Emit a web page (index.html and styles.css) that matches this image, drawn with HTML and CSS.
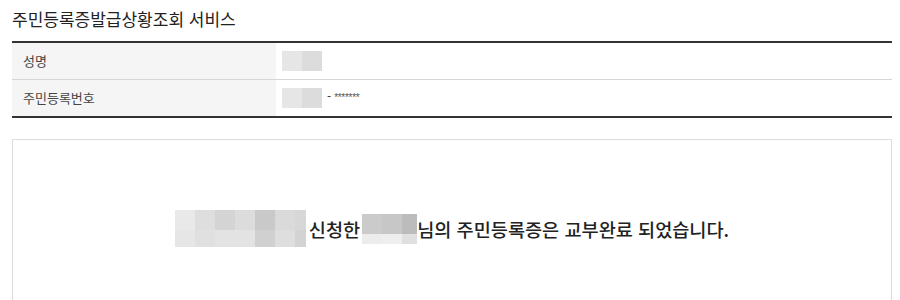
FILE: index.html
```html
<!DOCTYPE html>
<html lang="ko">
<head>
<meta charset="utf-8">
<link rel="stylesheet" href="styles.css">
</head>
<body>
<div class="page">
  <h1 class="title">주민등록증발급상황조회 서비스</h1>
  <table class="info">
    <tr>
      <th>성명</th>
      <td><span class="blur small"><i class="c1"></i><i class="c2"></i></span></td>
    </tr>
    <tr>
      <th>주민등록번호</th>
      <td><span class="blur small"><i class="c1"></i><i class="c2"></i></span><span class="dash">-</span><span class="stars">*******</span></td>
    </tr>
  </table>
  <div class="result">
    <p class="msg"><span class="blur big"><i class="b1"></i><i class="b2"></i><i class="b3"></i><i class="b4"></i><i class="b5"></i><i class="b6"></i><i class="b7"></i><i class="b8"></i><i class="b9"></i><i class="b10"></i><i class="b10"></i><i class="b11"></i><i class="b12"></i><i class="b13"></i></span><span class="t">신청한</span><span class="blur name"><i class="n1"></i><i class="n2"></i><i class="n3"></i><i class="n4"></i><i class="n5"></i><i class="n6"></i></span><span class="t">님의 주민등록증은 교부완료 되었습니다.</span></p>
  </div>
</div>
</body>
</html>
```
FILE: styles.css
```css
* { box-sizing: border-box; }
html, body { margin: 0; padding: 0; background: #fff; }
body {
  font-family: "Noto Sans CJK KR", "Noto Sans", sans-serif;
  color: #333;
}
.page { padding: 0 8px 0 12px; }
.title {
  margin: 0;
  padding-top: 7px;
  height: 41px;
  font-size: 17px;
  font-weight: 400;
  line-height: 24px;
  color: #222;
}
.info {
  width: 880px;
  border-collapse: collapse;
  border-top: 2px solid #333;
  border-bottom: 2px solid #333;
}
.info th, .info td {
  height: 37px;
  padding: 0;
  border-bottom: 1px solid #d6d6d6;
  vertical-align: middle;
}
.info tr:last-child th, .info tr:last-child td { border-bottom: none; height: 38px; }
.info th {
  width: 264px;
  background: #f5f5f5;
  text-align: left;
  padding-left: 11px;
  font-size: 13px;
  font-weight: 400;
  color: #444;
}
.info td { padding-left: 6px; font-size: 12px; }
.blur { display: inline-grid; vertical-align: middle; }
.blur i { display: block; }
.small { grid-template-columns: 20px 20px; grid-template-rows: 20px; }
.c1 { background: #e6e6e6; }
.c2 { background: #dcdcdc; }
.dash { margin-left: 5px; color: #333; }
.stars { margin-left: 3px; font-family: "Liberation Sans", sans-serif; font-size: 10px; letter-spacing: -0.3px; color: #555; }

.result {
  margin-top: 21px;
  height: 200px;
  width: 880px;
  border: 1px solid #dcdcdc;
  border-bottom: none;
  padding-top: 67px;
}
.msg {
  margin: 0;
  text-align: center;
  font-size: 18.6px;
  font-weight: 500;
  color: #222;
  line-height: 37px;
}
.msg .t { vertical-align: middle; }
.big { grid-template-columns: repeat(6, 20px) 11px; grid-template-rows: 20px 17px; margin-right: 3px; }
.b1 { background: #e9e9e9; } .b2 { background: #dedede; } .b3 { background: #d4d4d4; }
.b4 { background: #dcdcdc; } .b5 { background: #c9c9c9; } .b6 { background: #dadada; } .b7 { background: #d7d7d7; }
.b8 { background: #e6e6e6; } .b9 { background: #e0e0e0; } .b10 { background: #e3e3e3; }
.b11 { background: #d0d0d0; } .b12 { background: #dedede; } .b13 { background: #d3d3d3; }
.name { grid-template-columns: 20px 20px 15px; grid-template-rows: 20px 10px; margin-left: 2px; }
.n1 { background: #cbcbcb; } .n2 { background: #c7c7c7; } .n3 { background: #bcbcbc; }
.n4 { background: #ececec; } .n5 { background: #eeeeee; } .n6 { background: #e0e0e0; }
```
